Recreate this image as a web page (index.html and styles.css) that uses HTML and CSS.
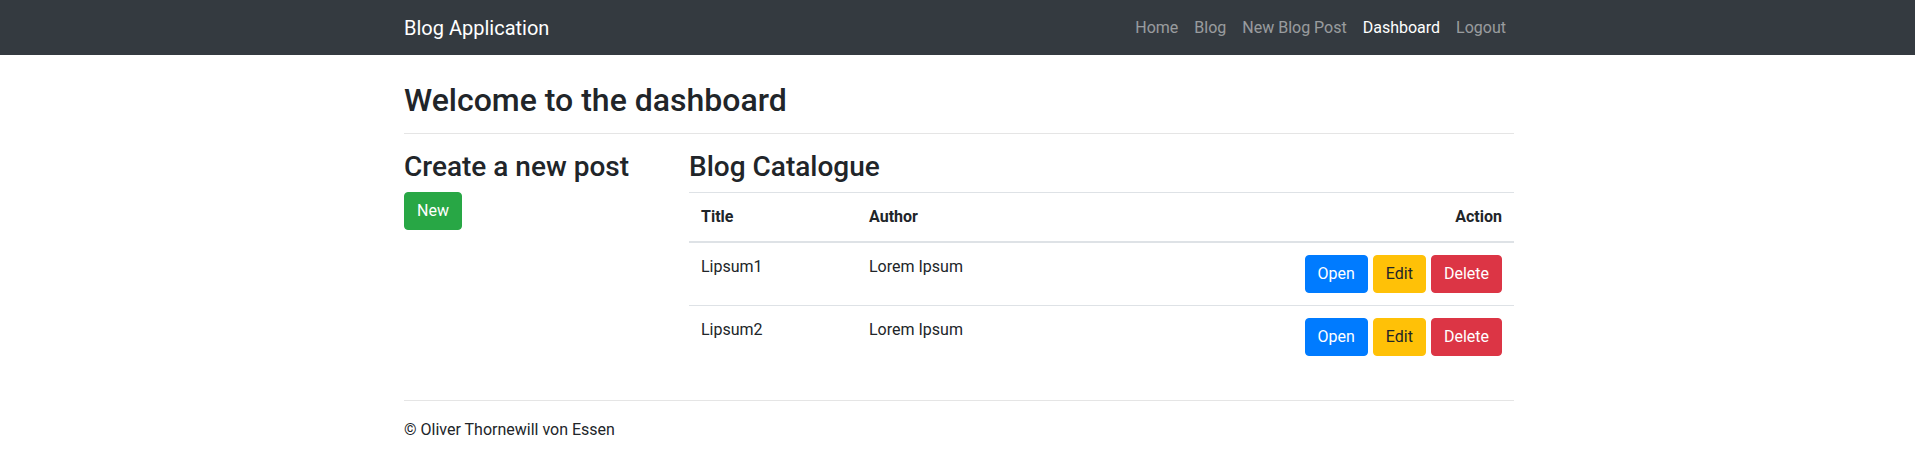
FILE: index.html
```html
<!DOCTYPE html>
<html lang="en">
<head>
<meta charset="utf-8">
<title>Blog Application</title>
<link rel="stylesheet" href="styles.css">
</head>
<body>
<nav class="navbar">
  <div class="container nav-inner">
    <a class="brand" href="#">Blog Application</a>
    <ul class="nav-links">
      <li><a class="nav-link" href="#">Home</a></li>
      <li><a class="nav-link" href="#">Blog</a></li>
      <li><a class="nav-link" href="#">New Blog Post</a></li>
      <li><a class="nav-link active" href="#">Dashboard</a></li>
      <li><a class="nav-link" href="#">Logout</a></li>
    </ul>
  </div>
</nav>
<main class="container main">
  <h2 class="page-title">Welcome to the dashboard</h2>
  <hr class="divider top-divider">
  <div class="layout">
    <section class="sidebar">
      <h3 class="section-title">Create a new post</h3>
      <a class="btn btn-success" href="#">New</a>
    </section>
    <section class="catalogue">
      <h3 class="section-title">Blog Catalogue</h3>
      <table class="table">
        <thead>
          <tr>
            <th class="col-title">Title</th>
            <th class="col-author">Author</th>
            <th class="col-action">Action</th>
          </tr>
        </thead>
        <tbody>
          <tr>
            <td>Lipsum1</td>
            <td>Lorem Ipsum</td>
            <td class="col-action">
              <div class="actions">
                <a class="btn btn-primary" href="#">Open</a>
                <a class="btn btn-warning" href="#">Edit</a>
                <a class="btn btn-danger" href="#">Delete</a>
              </div>
            </td>
          </tr>
          <tr>
            <td>Lipsum2</td>
            <td>Lorem Ipsum</td>
            <td class="col-action">
              <div class="actions">
                <a class="btn btn-primary" href="#">Open</a>
                <a class="btn btn-warning" href="#">Edit</a>
                <a class="btn btn-danger" href="#">Delete</a>
              </div>
            </td>
          </tr>
        </tbody>
      </table>
    </section>
  </div>
  <footer class="footer">
    <hr class="divider footer-divider">
    <p class="copyright">© Oliver Thornewill von Essen</p>
  </footer>
</main>
</body>
</html>
```

FILE: styles.css
```css
* {
  box-sizing: border-box;
}

html, body {
  margin: 0;
  padding: 0;
}

body {
  font-family: "Roboto", "Liberation Sans", sans-serif;
  font-size: 16px;
  line-height: 1.5;
  color: #212529;
  background: #fff;
}

a {
  text-decoration: none;
}

.container {
  box-sizing: content-box;
  width: 1110px;
  padding-left: 3px;
  margin: 0 auto;
}

/* Navbar */
.navbar {
  background: #343a40;
  height: 55px;
  padding-top: 8px;
}

.nav-inner {
  display: flex;
  justify-content: space-between;
  align-items: flex-start;
}

.brand {
  color: #fff;
  font-size: 20px;
  line-height: 30px;
  padding: 5px 0;
}

.nav-links {
  display: flex;
  list-style: none;
  margin: 0;
  padding: 0;
}

.nav-link {
  display: block;
  padding: 8px;
  line-height: 24px;
  color: rgba(255, 255, 255, 0.5);
}

.nav-link.active {
  color: #fff;
}

/* Main */
.main {
  padding-top: 26px;
}

.page-title {
  font-size: 32px;
  font-weight: 500;
  line-height: 1.2;
  margin: 0;
}

.divider {
  border: 0;
  border-top: 1px solid rgba(0, 0, 0, 0.1);
  margin: 0;
}

.top-divider {
  margin-top: 14px;
  margin-bottom: 16px;
}

.layout {
  display: grid;
  grid-template-columns: 255px 1fr;
  column-gap: 30px;
}

.section-title {
  font-size: 28px;
  font-weight: 500;
  line-height: 1.2;
  margin: 0 0 8px;
}

/* Buttons */
.btn {
  display: inline-block;
  font-size: 16px;
  line-height: 24px;
  padding: 6px 12px;
  border: 1px solid transparent;
  border-radius: 4px;
  text-align: center;
  white-space: nowrap;
}

.btn-success {
  background: #28a745;
  border-color: #28a745;
  color: #fff;
}

.btn-primary {
  background: #007bff;
  border-color: #007bff;
  color: #fff;
}

.btn-warning {
  background: #ffc107;
  border-color: #ffc107;
  color: #212529;
}

.btn-danger {
  background: #dc3545;
  border-color: #dc3545;
  color: #fff;
}

/* Table */
.table {
  width: 100%;
  border-collapse: collapse;
  margin-bottom: 16px;
}

.table th,
.table td {
  padding: 12px;
  vertical-align: top;
  border-top: 1px solid #dee2e6;
  text-align: left;
}

.table th {
  font-weight: 700;
}

.table thead th {
  border-bottom: 2px solid #dee2e6;
}

.col-title {
  width: 168px;
}

.table .col-action {
  text-align: right;
  width: 433px;
}

.actions {
  display: flex;
  justify-content: flex-end;
  gap: 5px;
}

/* Footer */
.footer-divider {
  margin-top: 16px;
}

.copyright {
  margin: 17px 0 16px;
}
```
